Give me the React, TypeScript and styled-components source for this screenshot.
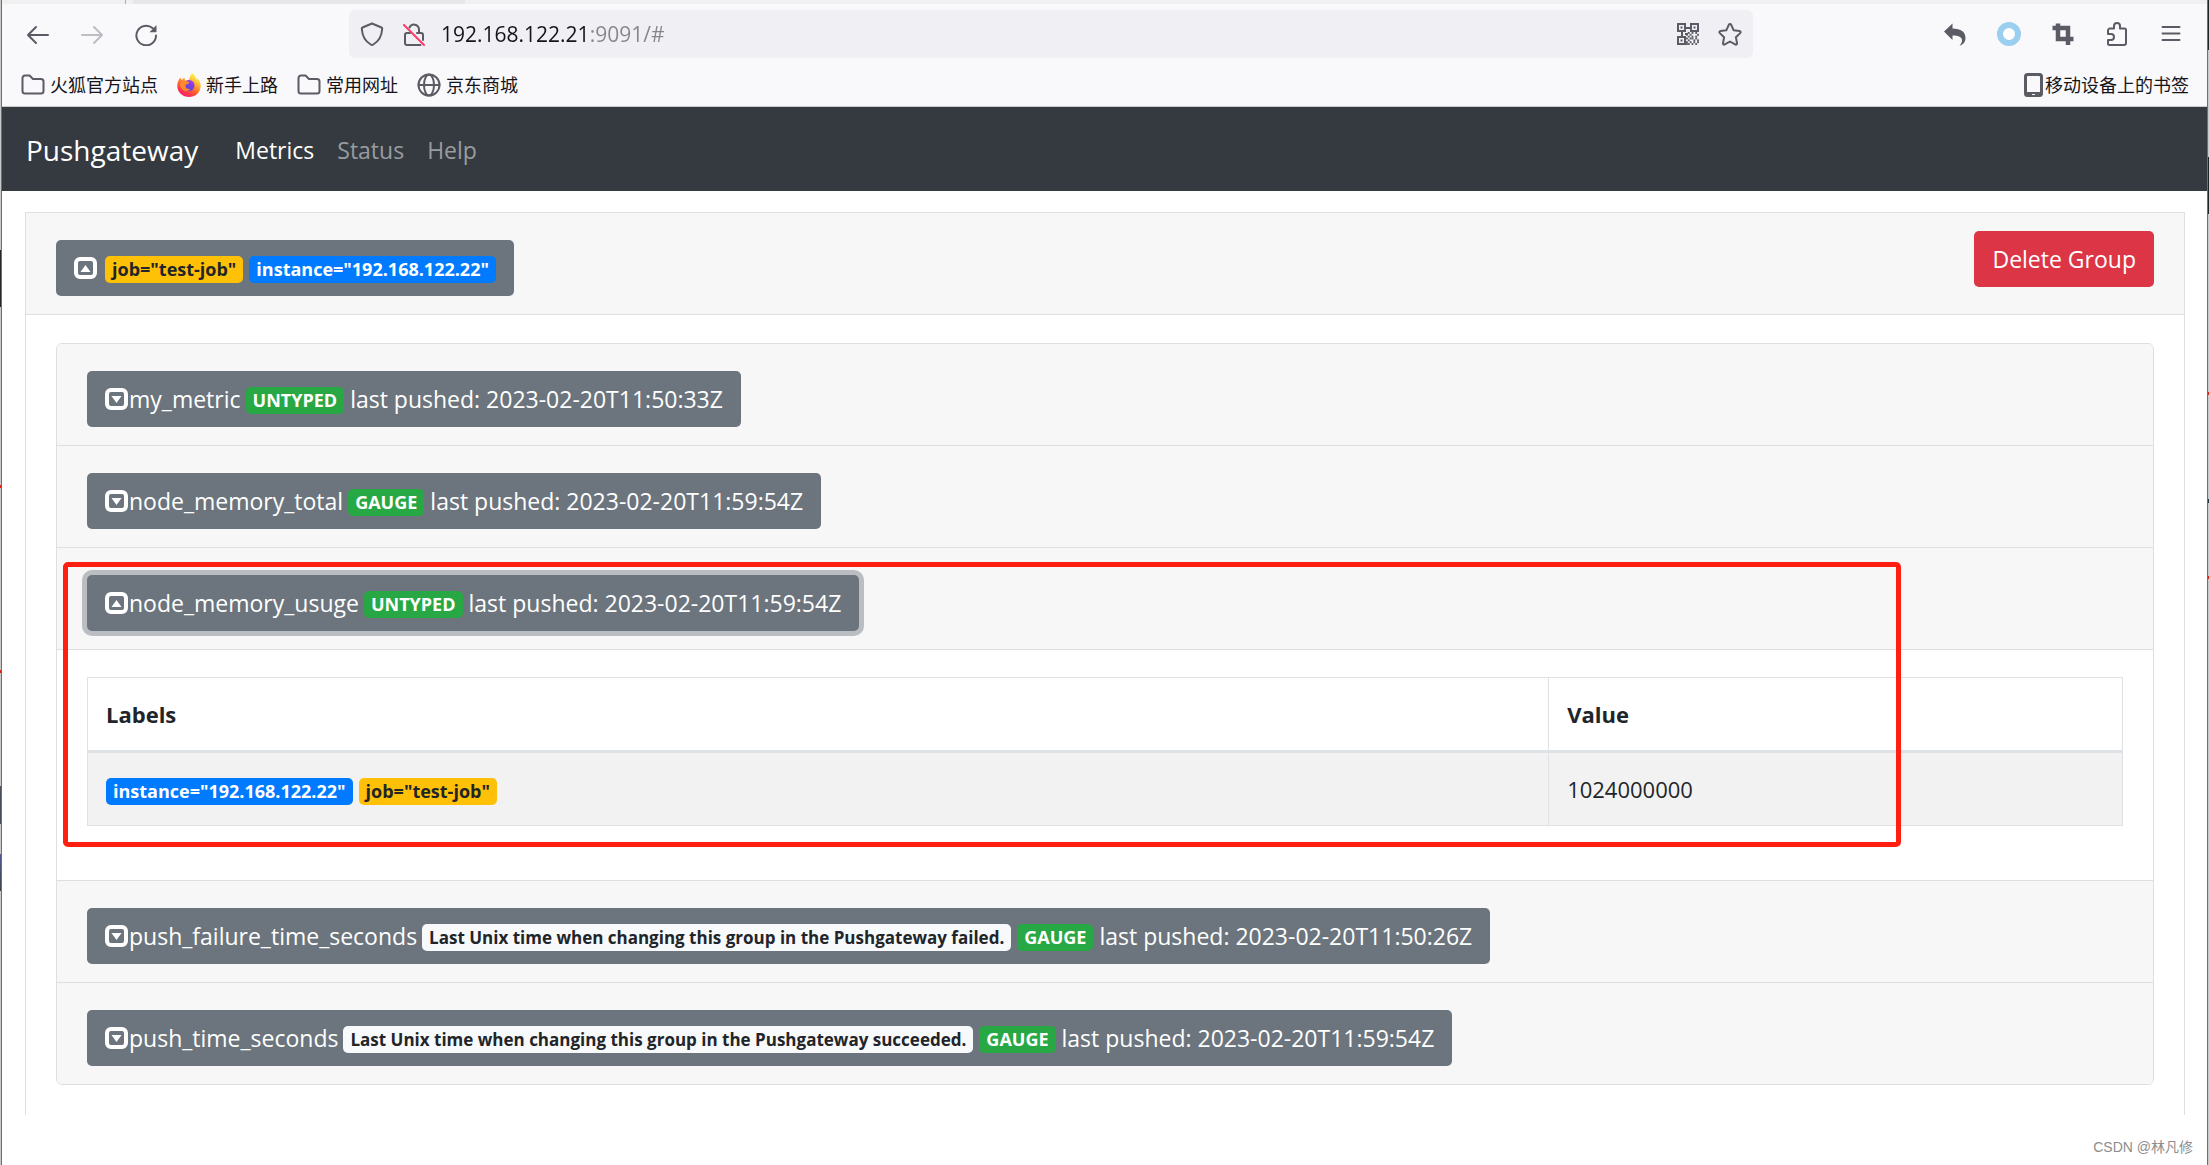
import React, { useState } from "react";
import styled, { createGlobalStyle, css } from "styled-components";

const uiFont = `"Open Sans", "Noto Sans CJK SC", sans-serif`;

const GlobalStyle = createGlobalStyle`
  *, *::before, *::after { box-sizing: border-box; }
  body { margin: 0; background: #fff; color: #212529; font: 22px/36px ${uiFont}; }
  button, input { font: inherit; }
`;

/* ---------- window ---------- */

const Window = styled.div`
  display: flex;
  min-height: 100vh;
`;

const LeftEdge = styled.div`
  flex: 0 0 2px;
  border-right: 1px solid #6f6f6f;
  background: linear-gradient(
    #c9c9c9 250px, #22262b 250px, #22262b 307px, #c9c9c9 307px, #c9c9c9 485px,
    #e02010 485px, #e02010 488px, #c9c9c9 488px, #c9c9c9 670px, #e02010 670px,
    #e02010 673px, #c9c9c9 673px, #c9c9c9 786px, #4a5058 786px, #4a5058 824px,
    #c9c9c9 824px, #c9c9c9 854px, #55589a 854px, #3d4248 891px, #c9c9c9 891px
  );
`;

const RightEdge = styled.div`
  flex: 0 0 2px;
  border-left: 1px solid #6f6f6f;
  background: linear-gradient(
    #22262b 50px, #c9c9c9 50px, #c9c9c9 157px, #22262b 157px, #22262b 214px,
    #c9c9c9 214px, #c9c9c9 392px, #e02010 392px, #e02010 395px, #c9c9c9 395px,
    #c9c9c9 499px, #22364a 499px, #22364a 503px, #c9c9c9 503px, #c9c9c9 576px,
    #e02010 576px, #e02010 579px, #c9c9c9 579px
  );
`;

const Page = styled.div`
  flex: 1;
  min-width: 0;
  display: flex;
  flex-direction: column;
`;

/* ---------- browser chrome ---------- */

const TabStrip = styled.div`
  display: flex;
  height: 4px;
  padding-left: 123px;
  background: #f0f0f0;
`;

const TabEdge = styled.span`
  width: 340px;
  border-left: 1px solid #aeaeae;
  background: linear-gradient(90deg, #f0f0f0 7px, #e6e6e6 7px);
`;

const Toolbar = styled.div`
  display: flex;
  align-items: center;
  height: 60px;
  padding: 0 9px;
  background: #f9f9fb;
`;

const ToolButton = styled.button`
  display: flex;
  align-items: center;
  justify-content: center;
  width: 54px;
  height: 48px;
  padding: 0;
  border: 0;
  background: none;
  color: #5b5b66;
  &:disabled { color: #bdbdc3; }
`;

const AddressBar = styled.form`
  flex: 1;
  display: flex;
  align-items: center;
  height: 48px;
  margin: 0 175px 0 176px;
  padding: 0 2px;
  border-radius: 6px;
  background: #f0f0f4;
`;

const AddressButton = styled(ToolButton)`
  width: 42px;
`;

const AddressInput = styled.input`
  flex: 1;
  min-width: 0;
  padding: 0;
  margin-left: 6px;
  border: 0;
  outline: 0;
  font-size: 21px;
  color: transparent;
  background: linear-gradient(90deg, #15141a 149px, #85858b 149px);
  background-clip: text;
  -webkit-background-clip: text;
`;

const BookmarkBar = styled.nav`
  display: flex;
  align-items: center;
  gap: 19px;
  height: 43px;
  padding: 0 18px 0 19px;
  border-bottom: 1px solid #ccc;
  background: #f9f9fb;
`;

const Bookmark = styled.a<{ $end?: boolean }>`
  display: flex;
  align-items: center;
  gap: ${(p) => (p.$end ? 2 : 5)}px;
  margin-left: ${(p) => (p.$end ? "auto" : 0)};
  color: #15141a;
  font-size: 18px;
  line-height: 26px;
  text-decoration: none;
  svg { color: #5b5b66; }
`;

/* ---------- site navigation ---------- */

const NavBar = styled.nav`
  display: flex;
  align-items: center;
  gap: 23px;
  height: 84px;
  padding: 2px 24px 0;
  background: #343a40;
`;

const Brand = styled.a`
  margin-right: 14px;
  color: #fff;
  font-size: 28px;
  text-decoration: none;
`;

const NavLink = styled.a<{ $active?: boolean }>`
  color: ${(p) => (p.$active ? "#fff" : "#999c9f")};
  font-size: 23px;
  text-decoration: none;
`;

/* ---------- groups and metrics ---------- */

const Content = styled.main`
  padding: 21px 22px 0 23px;
`;

const Group = styled.section`
  border: 1px solid #dfdfdf;
  border-bottom: 0;
`;

const headerSurface = css`
  display: flex;
  background: #f7f7f7;
  border-bottom: 1px solid #dfdfdf;
`;

const GroupHeader = styled.header`
  ${headerSurface}
  justify-content: space-between;
  align-items: flex-start;
  padding: 18px 30px;
`;

const GroupBody = styled.div`
  padding: 28px 30px 30px;
`;

const Button = styled.button<{ $danger?: boolean; $focused?: boolean }>`
  display: flex;
  align-items: center;
  height: 56px;
  padding: 0 18px;
  border: 0;
  border-radius: 5px;
  color: #fff;
  font-size: 23px;
  white-space: pre;
  background: ${(p) => (p.$danger ? "#dc3545" : "#6c757d")};
  box-shadow: ${(p) => (p.$focused ? "0 0 0 5px #babec2" : "none")};
`;

const ToggleButton = styled(Button)`
  margin-top: 9px;
`;

const Badge = styled.span<{ $tone: Tone }>`
  padding: 0 7px;
  border-radius: 5px;
  font-size: ${(p) => (p.$tone === "help" ? 17 : 18)}px;
  font-weight: 700;
  line-height: 27px;
  white-space: nowrap;
  ${(p) => tones[p.$tone]}
`;

const BadgeRow = styled.span<{ $inset?: boolean }>`
  display: flex;
  gap: 6px;
  padding: ${(p) => (p.$inset ? "2px 0 0 8px" : "7px 0 2px")};
`;

const MetricName = styled.span`
  margin: 0 5px 0 1px;
`;

const MetricBadges = styled.span`
  display: flex;
  gap: 6px;
  margin-right: 6px;
  padding-top: 2px;
`;

const MetricList = styled.div`
  border: 1px solid #dfdfdf;
  border-radius: 6px;
  overflow: hidden;
`;

const MetricItem = styled.article`
  position: relative;
  & + & { border-top: 1px solid #dfdfdf; }
`;

const MetricHeader = styled.header<{ $open?: boolean }>`
  ${headerSurface}
  border-bottom-width: ${(p) => (p.$open ? "1px" : "0")};
  padding: 18px 30px;
`;

const MetricBody = styled.div`
  padding: 27px 30px 54px;
`;

const SampleTable = styled.table`
  width: 100%;
  table-layout: fixed;
  border-collapse: collapse;
  th, td {
    padding: 18px;
    border: 1px solid #dee2e6;
    text-align: left;
  }
  th:first-child { width: 71.8%; }
  thead th { border-bottom-width: 3px; }
  tbody { background: #f2f2f2; }
`;

const Highlight = styled.div`
  position: absolute;
  inset: 14px 252px 33px 6px;
  border: 5px solid #ff1e10;
  border-radius: 5px;
  pointer-events: none;
`;

const Credit = styled.footer`
  margin-top: auto;
  padding: 0 14px 6px;
  color: #8d8d8d;
  font: 14px/24px "Liberation Sans", "Noto Sans CJK SC", sans-serif;
  text-align: right;
`;

type Tone = "job" | "label" | "type" | "help";

const tones: Record<Tone, string> = {
  job: "background: #ffc107; color: #212529;",
  label: "background: #007bff; color: #fff;",
  type: "background: #28a745; color: #fff;",
  help: "background: #f8f9fa; color: #212529;",
};

/* ---------- icons ---------- */

const line = {
  fill: "none",
  stroke: "currentColor",
  strokeWidth: 2,
  strokeLinecap: "round" as const,
  strokeLinejoin: "round" as const,
};

const Svg = ({ w = 24, h = 24, children }: { w?: number; h?: number; children: React.ReactNode }) => (
  <svg width={w} height={h} viewBox={`0 0 ${w} ${h}`} aria-hidden="true">{children}</svg>
);

const BackIcon = () => (
  <Svg><path {...line} d="M22 13H2M10 5L2 13l8 8" /></Svg>
);
const ForwardIcon = () => (
  <Svg><path {...line} d="M2 13h20M14 5l8 8-8 8" /></Svg>
);
const ReloadIcon = () => (
  <Svg>
    <path {...line} d="M22 13.5A9.8 9.8 0 1 1 18.500 6" />
    <path fill="currentColor" d="M22.500 3v6.500a.8.8 0 0 1-.8.8H15.500z" />
  </Svg>
);
const ShieldIcon = () => (
  <Svg>
    <path {...line} d="M12 1.500L2.500 5.500c-.6.200-.8.700-.7 1.300.500 8.200 3.700 12.700 8.900 15.700.8.500 1.800.500 2.600 0 5.200-3 8.400-7.500 8.900-15.700.1-.6-.1-1.100-.7-1.300z" />
  </Svg>
);
const LockIcon = () => (
  <Svg>
    <path {...line} d="M7.500 5.500A5 5 0 0 1 17 7v4" />
    <path {...line} d="M15 11h4a2 2 0 0 1 2 2v5M18.500 23H5a2 2 0 0 1-2-2v-8a2 2 0 0 1 2-2h3" />
    <path d="M2 3l20 20" stroke="#fb3b68" strokeWidth="2" strokeLinecap="round" />
  </Svg>
);
const StarIcon = () => (
  <Svg>
    <path {...line} d="M12 2c.5 0 .9.300 1.100.700l2.600 5.600 5.800.700c1.100.100 1.500 1.400.7 2.100l-4.300 4.100 1.100 5.900c.200 1.100-.9 1.900-1.800 1.300L12 19.500l-5.200 2.900c-.9.600-2-.2-1.800-1.300l1.100-5.900-4.300-4.100c-.8-.7-.4-2 .7-2.100l5.800-.7 2.600-5.600C11.100 2.300 11.500 2 12 2z" />
  </Svg>
);
const QR_DOTS = "0101010 1010001 0101010 1011010 0100101 1010101 1101010".split(" ");
const QrIcon = () => (
  <Svg w={22} h={22}>
    <g fill="none" stroke="currentColor" strokeWidth="2">
      <path d="M1 1h7v7H1zM14 1h7v7h-7zM1 14h7v7H1z" />
    </g>
    <g fill="currentColor">
      <path d="M3.500 3.500h2v2h-2zM16.500 3.500h2v2h-2zM3.500 16.500h2v2h-2zM9 4h4v2H9zM4 9h2v4H4zM8 10h3v2H8z" />
      {QR_DOTS.map((row, y) =>
        [...row].map((on, x) =>
          on === "1" ? <rect key={`${x}-${y}`} x={9 + x * 1.85} y={9 + y * 1.85} width="1.85" height="1.85" /> : null,
        ),
      )}
    </g>
  </Svg>
);
const UndoIcon = () => (
  <Svg>
    <path fill="currentColor" d="M1 9.500L9.500 1.500V6.500c8.500 0 13 3.500 13 9.500 0 3.500-2 6.500-6 7.700 1.800-1.800 2.500-3.500 2.500-5.200 0-3.500-3-5-9.500-5v4.500z" />
  </Svg>
);
const RingIcon = () => (
  <Svg><circle cx="12" cy="12" r="9" fill="#fff" stroke="#9bcfef" strokeWidth="6" /></Svg>
);
const CropIcon = () => (
  <Svg>
    <path fill="none" stroke="currentColor" strokeWidth="4.500" d="M1.500 6h15.500v17M7 1.500v15.500h15.500" />
  </Svg>
);
const PuzzleIcon = () => (
  <Svg>
    <path {...line} d="M3 12V8.500a2 2 0 0 1 2-2h4V4a3 3 0 0 1 6 0v2.500h4.500a1.500 1.500 0 0 1 1.500 1.500v13a2 2 0 0 1-2 2H4.500A1.500 1.500 0 0 1 3 21.500V18h3a3 3 0 0 0 0-6z" />
  </Svg>
);
const MenuIcon = () => (
  <Svg><path {...line} d="M3.500 5h17M3.500 11.500h17M3.500 18h17" /></Svg>
);
const FolderIcon = () => (
  <Svg>
    <path {...line} d="M4 2.500h4.500l3.500 3.500h8a2.500 2.500 0 0 1 2.500 2.500v9.500a2.500 2.500 0 0 1-2.500 2.500H4a2.500 2.500 0 0 1-2.500-2.500V5A2.500 2.500 0 0 1 4 2.500z" />
  </Svg>
);
const GlobeIcon = () => (
  <Svg>
    <g {...line}>
      <circle cx="12" cy="12" r="10.500" />
      <ellipse cx="12" cy="12" rx="5" ry="10.500" />
      <path d="M1.500 12h21" />
    </g>
  </Svg>
);
const PhoneIcon = () => (
  <Svg w={19} h={24}>
    <path fill="currentColor" fillRule="evenodd" d="M3.500 0h12A3.500 3.500 0 0 1 19 3.500v17a3.500 3.500 0 0 1-3.500 3.500h-12A3.500 3.500 0 0 1 0 20.500v-17A3.500 3.500 0 0 1 3.500 0zM4 3a1 1 0 0 0-1 1v15h13V4a1 1 0 0 0-1-1zM8 21v1h3v-1z" />
  </Svg>
);
const FirefoxIcon = () => (
  <Svg>
    <defs>
      <linearGradient id="flame" x1="0.8" y1="0.1" x2="0.300" y2="1">
        <stop offset="0" stopColor="#fff44f" />
        <stop offset="0.350" stopColor="#ffa930" />
        <stop offset="0.650" stopColor="#ff5634" />
        <stop offset="1" stopColor="#f5156c" />
      </linearGradient>
      <linearGradient id="orb" x1="0.700" y1="0" x2="0.300" y2="1">
        <stop offset="0" stopColor="#a03be8" />
        <stop offset="1" stopColor="#5347d8" />
      </linearGradient>
    </defs>
    <path fill="url(#flame)" d="M15 0c3 2 4 4.500 4.500 6.500L21 5.500c2 3 3 5.500 2.700 8C23 20 18 24 12 24S.5 19.500.3 13.500C.2 10 1.200 7 3.500 4.500L4.500 7l3-2.500L8 7.500l4-.5c.5-2.500 1.500-5 3-7z" />
    <circle cx="12" cy="12.500" r="5.500" fill="url(#orb)" />
    <path fill="#ff8a2b" d="M3 10c3-2.500 6-2.500 9.500-.5-1 1.800-3 1.500-4 2.500-.5 3 1.500 4.500 5 4-2 2.500-6 2.500-8 .5S2.500 12.500 3 10z" />
  </Svg>
);

const ToggleIcon = ({ open }: { open?: boolean }) => (
  <Svg w={23} h={22}>
    <rect x="2" y="2" width="19" height="18" rx="4" fill="none" stroke="#fff" strokeWidth="4" />
    <path fill="#fff" d={open ? "M6.500 15h10l-5-7z" : "M6.500 8h10l-5 7z"} />
  </Svg>
);

/* ---------- data ---------- */

type Label = { text: string; tone: Tone };
type Metric = {
  name: string;
  help?: string;
  type: string;
  pushed: string;
  samples?: { labels: Label[]; value: string }[];
};

const jobLabel: Label = { text: 'job="test-job"', tone: "job" };
const instanceLabel: Label = { text: 'instance="192.168.122.22"', tone: "label" };

const metrics: Metric[] = [
  { name: "my_metric", type: "UNTYPED", pushed: "2023-02-20T11:50:33Z" },
  { name: "node_memory_total", type: "GAUGE", pushed: "2023-02-20T11:59:54Z" },
  {
    name: "node_memory_usuge",
    type: "UNTYPED",
    pushed: "2023-02-20T11:59:54Z",
    samples: [{ labels: [instanceLabel, jobLabel], value: "1024000000" }],
  },
  {
    name: "push_failure_time_seconds",
    help: "Last Unix time when changing this group in the Pushgateway failed.",
    type: "GAUGE",
    pushed: "2023-02-20T11:50:26Z",
  },
  {
    name: "push_time_seconds",
    help: "Last Unix time when changing this group in the Pushgateway succeeded.",
    type: "GAUGE",
    pushed: "2023-02-20T11:59:54Z",
  },
];

const MetricCard = ({ metric }: { metric: Metric }) => {
  const open = Boolean(metric.samples);
  return (
    <MetricItem>
      <MetricHeader $open={open}>
        <ToggleButton type="button" aria-expanded={open} $focused={open}>
          <ToggleIcon open={open} />
          <MetricName>{metric.name}</MetricName>
          <MetricBadges>
            {metric.help && <Badge $tone="help">{metric.help}</Badge>}
            <Badge $tone="type">{metric.type}</Badge>
          </MetricBadges>
          last pushed: {metric.pushed}
        </ToggleButton>
      </MetricHeader>
      {metric.samples && (
        <MetricBody>
          <SampleTable>
            <thead>
              <tr><th scope="col">Labels</th><th scope="col">Value</th></tr>
            </thead>
            <tbody>
              {metric.samples.map((s) => (
                <tr key={s.value}>
                  <td>
                    <BadgeRow>
                      {s.labels.map((l) => <Badge key={l.text} $tone={l.tone}>{l.text}</Badge>)}
                    </BadgeRow>
                  </td>
                  <td>{s.value}</td>
                </tr>
              ))}
            </tbody>
          </SampleTable>
        </MetricBody>
      )}
      {open && <Highlight />}
    </MetricItem>
  );
};

export default function App() {
  const [url, setUrl] = useState("192.168.122.21:9091/#");
  return (
    <>
      <GlobalStyle />
      <Window>
        <LeftEdge />
        <Page>
          <TabStrip><TabEdge /></TabStrip>
          <Toolbar>
            <ToolButton type="button" aria-label="Back"><BackIcon /></ToolButton>
            <ToolButton type="button" aria-label="Forward" disabled><ForwardIcon /></ToolButton>
            <ToolButton type="button" aria-label="Reload"><ReloadIcon /></ToolButton>
            <AddressBar onSubmit={(e) => e.preventDefault()}>
              <AddressButton type="button" aria-label="Tracking protection"><ShieldIcon /></AddressButton>
              <AddressButton type="button" aria-label="Connection not secure"><LockIcon /></AddressButton>
              <AddressInput aria-label="Address" value={url} onChange={(e) => setUrl(e.target.value)} />
              <AddressButton type="button" aria-label="QR code"><QrIcon /></AddressButton>
              <AddressButton type="button" aria-label="Bookmark this page"><StarIcon /></AddressButton>
            </AddressBar>
            <ToolButton type="button" aria-label="Undo"><UndoIcon /></ToolButton>
            <ToolButton type="button" aria-label="Assistant"><RingIcon /></ToolButton>
            <ToolButton type="button" aria-label="Crop"><CropIcon /></ToolButton>
            <ToolButton type="button" aria-label="Extensions"><PuzzleIcon /></ToolButton>
            <ToolButton type="button" aria-label="Menu"><MenuIcon /></ToolButton>
          </Toolbar>
          <BookmarkBar>
            <Bookmark href="#"><FolderIcon />火狐官方站点</Bookmark>
            <Bookmark href="#"><FirefoxIcon />新手上路</Bookmark>
            <Bookmark href="#"><FolderIcon />常用网址</Bookmark>
            <Bookmark href="#"><GlobeIcon />京东商城</Bookmark>
            <Bookmark href="#" $end><PhoneIcon />移动设备上的书签</Bookmark>
          </BookmarkBar>
          <NavBar>
            <Brand href="#">Pushgateway</Brand>
            <NavLink href="#" $active>Metrics</NavLink>
            <NavLink href="#">Status</NavLink>
            <NavLink href="#">Help</NavLink>
          </NavBar>
          <Content>
            <Group>
              <GroupHeader>
                <ToggleButton type="button" aria-expanded="true">
                  <ToggleIcon open />
                  <BadgeRow $inset>
                    <Badge $tone="job">{jobLabel.text}</Badge>
                    <Badge $tone="label">{instanceLabel.text}</Badge>
                  </BadgeRow>
                </ToggleButton>
                <Button type="button" $danger>Delete Group</Button>
              </GroupHeader>
              <GroupBody>
                <MetricList>
                  {metrics.map((m) => <MetricCard key={m.name} metric={m} />)}
                </MetricList>
              </GroupBody>
            </Group>
          </Content>
          <Credit>CSDN @林凡修</Credit>
        </Page>
        <RightEdge />
      </Window>
    </>
  );
}
